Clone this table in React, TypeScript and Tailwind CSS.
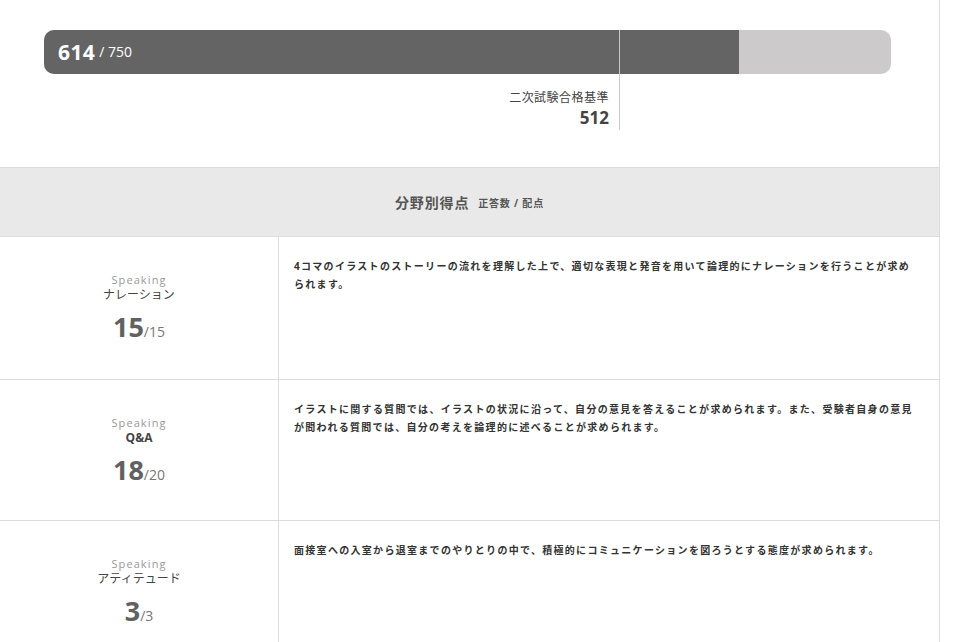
const rows = [
    {
        title: "ナレーション",
        score: 15,
        max: 15,
        text: "4コマのイラストのストーリーの流れを理解した上で、適切な表現と発音を用いて論理的にナレーションを行うことが求められます。",
    },
    {
        title: "Q&A",
        score: 18,
        max: 20,
        text: "イラストに関する質問では、イラストの状況に沿って、自分の意見を答えることが求められます。また、受験者自身の意見が問われる質問では、自分の考えを論理的に述べることが求められます。",
    },
    {
        title: "アティテュード",
        score: 3,
        max: 3,
        text: "面接室への入室から退室までのやりとりの中で、積極的にコミュニケーションを図ろうとする態度が求められます。",
    },
]

export default function App() {
    return (
        <div className="w-[940px] min-h-[642px] bg-white border-r border-[#dcdcdc] text-[#444]"
             style={{ fontFamily: '"Open Sans", "Noto Sans CJK JP", sans-serif' }}>

            {/* total score bar */}
            <div className="px-11 pt-[30px] h-[168px] border-b border-[#dcdcdc]">
                <div className="relative">
                    <div className="flex h-[44px] w-[847px] rounded-[10px] overflow-hidden bg-[#cdcacb]">
                        <div className="w-[695px] bg-[#646464] flex items-center pl-[14px] text-white">
                            <span className="text-[21px] font-bold leading-none tracking-[0.02em]">614</span>
                            <span className="text-[14px] ml-1 leading-none">/ 750</span>
                        </div>
                    </div>
                    <div className="absolute left-[575px] top-0 w-px h-[100px] bg-[#c8c8c8]" />
                    <div className="absolute right-[286px] top-[58px] text-right">
                        <div className="text-[12px] text-[#444] leading-[20px] tracking-[0.04em]">二次試験合格基準</div>
                        <div className="text-[17px] font-bold text-[#444] leading-[20px]">512</div>
                    </div>
                </div>
            </div>

            {/* section header */}
            <div className="h-[69px] bg-[#e9e9e9] flex items-center justify-center border-b border-[#dcdcdc]">
                <span className="text-[14px] font-bold text-[#555] tracking-[0.06em]">分野別得点</span>
                <span className="text-[10px] font-bold text-[#555] ml-[9px] mt-[2px] tracking-[0.08em]">正答数 / 配点</span>
            </div>

            {rows.map((r, i) => (
                <div key={r.title} className={`flex border-b border-[#dcdcdc] ${i === 0 ? "h-[143px]" : "h-[141px]"}`}>
                    <div className="w-[279px] shrink-0 border-r border-[#dcdcdc] flex flex-col items-center pt-[36px]">
                        <div className="text-[11px] text-[#999] tracking-[0.1em] leading-[14px]">Speaking</div>
                        <div className={`text-[12px] text-[#444] leading-[16px] ${r.title === "Q&A" ? "font-bold" : ""}`}>{r.title}</div>
                        <div className="mt-[6px] flex items-baseline text-[#616161]">
                            <span className="text-[27px] font-bold leading-[36px]">{r.score}</span>
                            <span className="text-[14px] text-[#777]">/{r.max}</span>
                        </div>
                    </div>
                    <div className="flex-1 pl-[15px] pr-[22px] pt-[20px]">
                        <p className="text-[10px] font-bold text-[#333] tracking-[0.13em] leading-[18px]">{r.text}</p>
                    </div>
                </div>
            ))}
        </div>
    )
}
